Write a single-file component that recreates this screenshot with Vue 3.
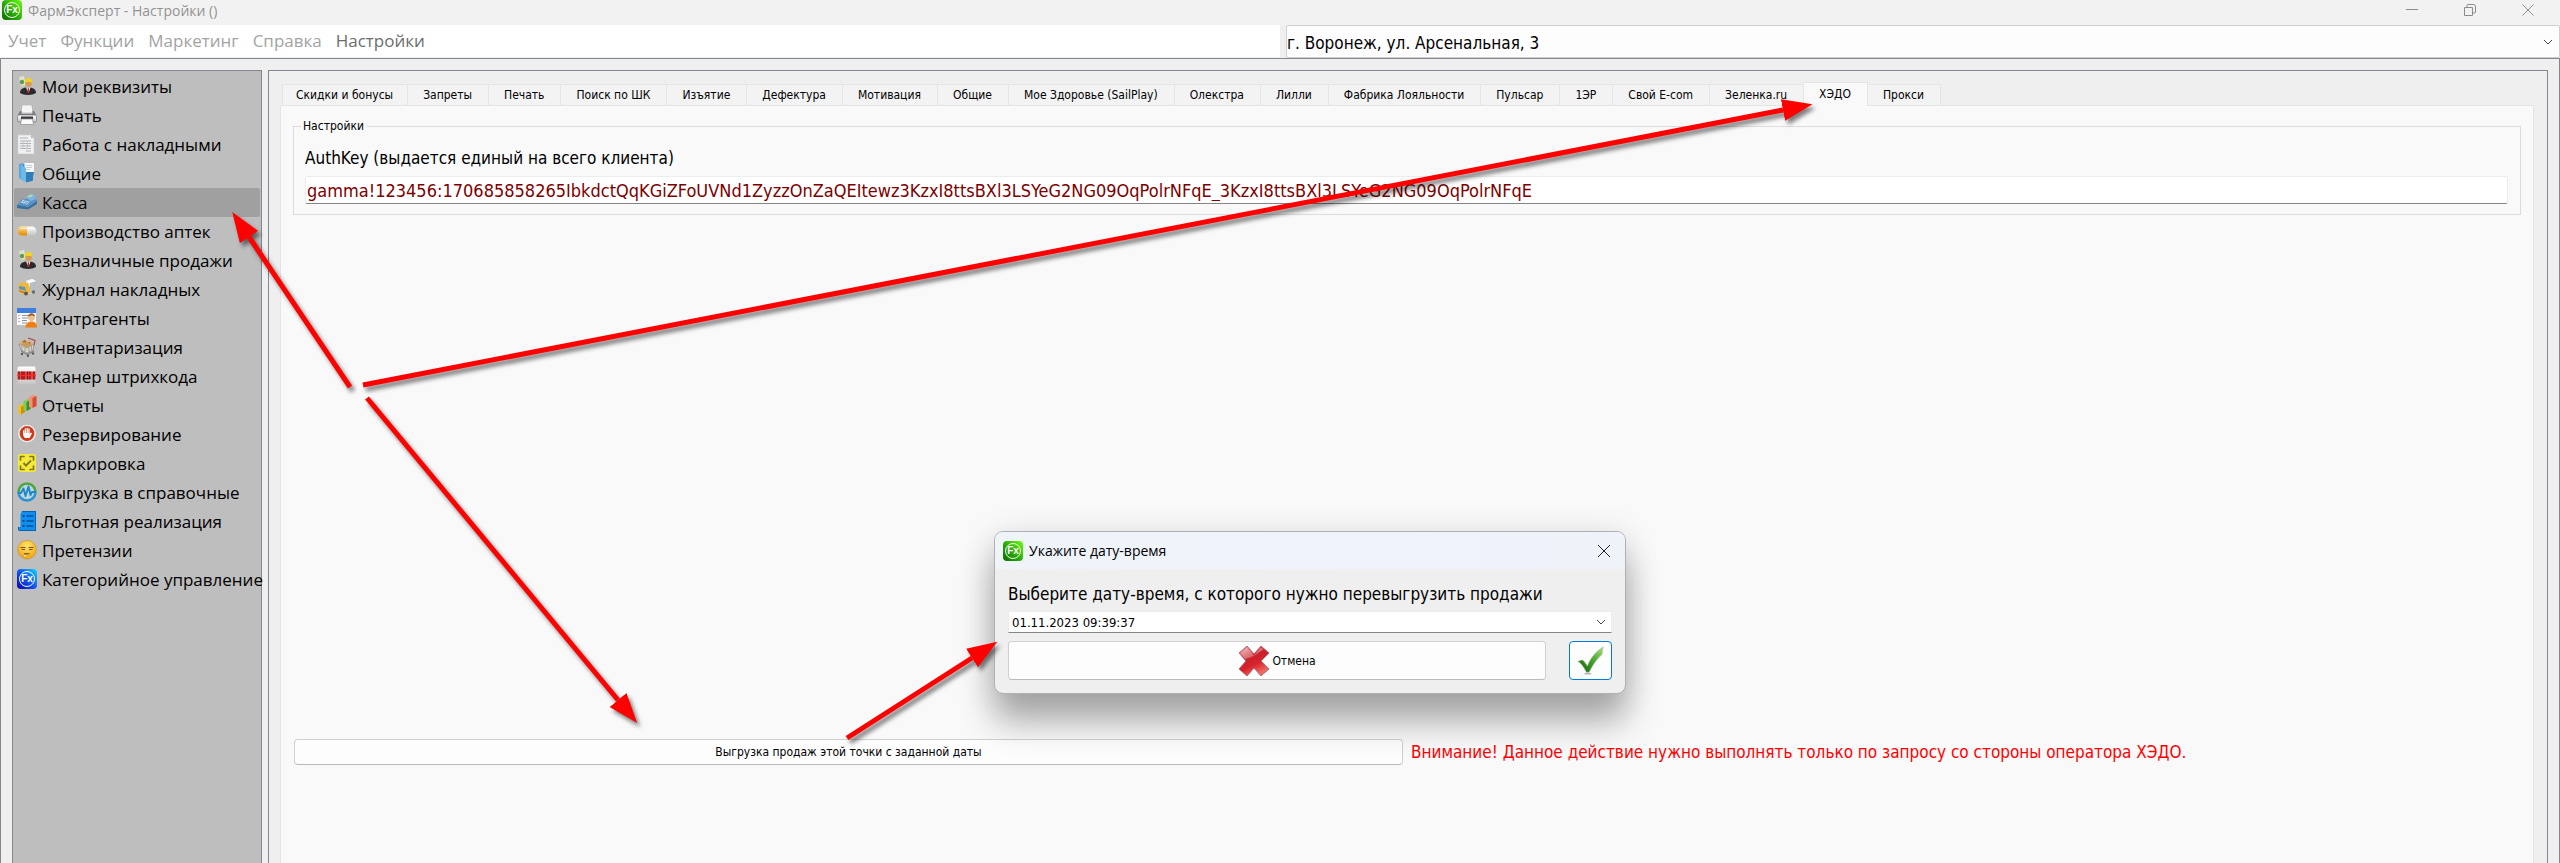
<template>
  <div class="window">
    <svg class="sprite" aria-hidden="true">
      <defs>
        <linearGradient id="g-red" x1="0" y1="0" x2="0.5" y2="1">
          <stop offset="0" stop-color="#f3b6b6" />
          <stop offset="0.45" stop-color="#c9202c" />
          <stop offset="0.7" stop-color="#d7222c" />
          <stop offset="1" stop-color="#ef6a62" />
        </linearGradient>
        <linearGradient id="g-check" x1="1" y1="0" x2="0" y2="1">
          <stop offset="0" stop-color="#a8e07c" />
          <stop offset="0.5" stop-color="#3fa322" />
          <stop offset="1" stop-color="#0d5c08" />
        </linearGradient>
        <linearGradient id="g-gray" x1="0" y1="0" x2="0" y2="1">
          <stop offset="0" stop-color="#ffffff" />
          <stop offset="1" stop-color="#c4c4c4" />
        </linearGradient>
        <linearGradient id="g-orange" x1="0" y1="0" x2="0" y2="1">
          <stop offset="0" stop-color="#ffd98a" />
          <stop offset="1" stop-color="#e58a00" />
        </linearGradient>
        <radialGradient id="g-face" cx="0.5" cy="0.3" r="0.7">
          <stop offset="0" stop-color="#ffe56a" />
          <stop offset="1" stop-color="#f0a410" />
        </radialGradient>
      </defs>

      <symbol id="i-person" viewBox="0 0 20 20">
        <path d="M2 1l5-1 2 9-5 2z" fill="#dfe3c4" />
        <circle cx="5" cy="6" r="2.2" fill="#5f9a58" />
        <path d="M3 8l3 1-1 3z" fill="#c9cfa0" />
        <path d="M3 17c0-4 3-5.500 8-5.500s8 1.500 8 5.500c-4 2.500-12 2.500-16 0z" fill="#2a2a2e" />
        <path d="M9 11.500h4.500l-2 5.500z" fill="#ffffff" />
        <path d="M10.800 12h1l.5 4-1 1.500-1-1.500z" fill="#c22a1e" />
        <circle cx="11.500" cy="7.500" r="3.300" fill="#d99a54" />
        <path d="M7.800 6.500c0-3 1.500-4.500 3.700-4.500s3.700 1.500 3.700 4.500c-2.400-1-5-1-7.400 0z" fill="#f2d41c" />
      </symbol>
      <symbol id="i-printer" viewBox="0 0 20 20">
        <path d="M5 0h10l1 8H4z" fill="#f4f4f4" stroke="#a5a5a5" stroke-width="0.6" />
        <path d="M3 6h1.500v3h11V6H17l2 4v5H1v-5z" fill="#77797d" />
        <rect x="0.500" y="10" width="19" height="7" rx="1.500" fill="url(#g-gray)" stroke="#77797d" stroke-width="0.7" />
        <rect x="4" y="11.500" width="12" height="2.500" fill="#3c3d40" />
        <path d="M4.500 14h11l1 5.500h-13z" fill="#fbfbfb" stroke="#8b8b8b" stroke-width="0.7" />
      </symbol>
      <symbol id="i-sheet" viewBox="0 0 20 20">
        <path d="M1 1h13l3 3v16H1z" fill="#eff1f2" stroke="#cfd2d4" stroke-width="0.7" />
        <path d="M14 1l3 3h-3z" fill="#b9bdc0" />
        <path d="M3 4h8M3 7h11M3 9.500h11M3 12h11M3 14.500h11M9 17h5" stroke="#aeb2b6" stroke-width="1" />
        <path d="M6 7v8M10.500 7v8" stroke="#c3c6ca" stroke-width="0.8" />
      </symbol>
      <symbol id="i-folder" viewBox="0 0 20 20">
        <path d="M2 1l4-1v17l-4-2z" fill="#5aa7dc" />
        <path d="M6 1h10v17H6z" fill="#3d8fcc" />
        <path d="M7.500 0H17v9H7.500z" fill="#f5f8fa" />
        <path d="M9 2.500h6M9 4.500h6M9 6.500h4" stroke="#b7c3cc" stroke-width="0.8" />
        <path d="M4 2l5 3v14.500l-5-3z" fill="#6db9ea" />
        <path d="M9 9h8l-2 9-6 1.500z" fill="#2f7dbb" />
      </symbol>
      <symbol id="i-cash" viewBox="0 0 20 20">
        <path d="M0 13l4-5 14-3 2 4v3l-9 5-11-1z" fill="#5a93c2" />
        <path d="M0 13l11 2 9-6v3l-9 5.500-11-1.500z" fill="#3c6f9d" />
        <path d="M8 5l6-3.500 4 1.500 1 4-5 2z" fill="#7db3dd" />
        <path d="M10 4.500l4-2 2.500 1-4 2z" fill="#b8dc9c" />
        <path d="M3.500 10l7 1.500M5 8.500l7 1.500M6.500 11.800l3-3M4 11l3-3M9.500 12.500l3-3" stroke="#c8e0f2" stroke-width="0.8" />
      </symbol>
      <symbol id="i-pill" viewBox="0 0 20 20">
        <rect x="0.500" y="5.500" width="19" height="9" rx="4.500" fill="url(#g-gray)" />
        <path d="M10 5.500H5a4.500 4.500 0 0 0 0 9h5z" fill="url(#g-orange)" />
        <path d="M4 7.500h12" stroke="#ffffff" stroke-opacity="0.7" stroke-width="1.4" stroke-linecap="round" />
      </symbol>
      <symbol id="i-journal" viewBox="0 0 20 20">
        <path d="M9 2l6-2 4 2v10l-6 3-4-2z" fill="#e3e8ec" />
        <path d="M13 4l6-2v10l-6 3z" fill="#b6bec6" />
        <path d="M9 2l6-2 4 2-6 2z" fill="#fafcfd" />
        <path d="M1 6l4-3 6 1 2 5v5l-5 2-6-3z" fill="#f0b93a" />
        <path d="M2 7l6 1 1 4-7-2z" fill="#5d93b8" />
        <path d="M2 11l6 2v2l-6-2.500z" fill="#c87f18" />
        <circle cx="9" cy="14.500" r="2" fill="#55585c" />
        <circle cx="16.500" cy="13" r="1.700" fill="#686b70" />
      </symbol>
      <symbol id="i-contacts" viewBox="0 0 20 20">
        <rect x="0" y="0" width="19" height="17" fill="#f8f9fb" />
        <rect x="0" y="0" width="19" height="5" fill="#3f7fdc" />
        <path d="M1 7.500h2M1 10.500h2M1 13.500h2" stroke="#d59ac4" stroke-width="1.2" />
        <path d="M5 7.500h10M5 10h6M5 12.500h5M5 15h5" stroke="#8f9398" stroke-width="1.200" />
        <circle cx="14.500" cy="9.500" r="3.400" fill="#efbf94" />
        <path d="M11 9c0-5 7-5 7 0-1-2-5-2-7 0z" fill="#9a5a2a" />
        <path d="M8.500 19.500c0-4 3-6 6-6s5.500 2 5.500 6z" fill="#ef7d10" />
      </symbol>
      <symbol id="i-cart" viewBox="0 0 20 20">
        <path d="M11 1l7 2.500-1 5" fill="none" stroke="#b04848" stroke-width="1.200" />
        <path d="M2 6l5-4 3 2 4 0 3 4-7 5z" fill="#d8b276" />
        <path d="M5 5l3-2 2 3zM10 6l3-1 1 3z" fill="#8f5d2c" />
        <path d="M2 7l8 4 7-4-1 6-6 3-6-3z" fill="#d9d6d0" stroke="#8b8780" stroke-width="0.7" />
        <path d="M4 7l6 3 5-2.500-3-1.500-4-1z" fill="#c99a58" />
        <path d="M5 9v4M8 10.500v4M12 10.500v4M14.500 9v4" stroke="#8b8780" stroke-width="0.7" />
        <path d="M4 14l6 3.500 7-3.500" fill="none" stroke="#77736e" stroke-width="1" />
        <circle cx="5" cy="17" r="1.200" fill="#5c5a58" />
        <circle cx="11" cy="18.800" r="1.200" fill="#5c5a58" />
        <circle cx="16" cy="16.500" r="1.200" fill="#5c5a58" />
      </symbol>
      <symbol id="i-barcode" viewBox="0 0 20 20">
        <rect x="0.500" y="0.500" width="18" height="18" rx="1.500" fill="url(#g-gray)" />
        <rect x="0.500" y="5.500" width="18" height="8" fill="#e04a4a" />
        <path d="M2 5.500v8M5 5.500v8M7 5.500v8M10.500 5.500v8M13 5.500v8M17 5.500v8" stroke="#8a1010" stroke-width="1.400" />
        <path d="M0 9.500h19" stroke="#ff2a2a" stroke-width="1.400" />
      </symbol>
      <symbol id="i-chart" viewBox="0 0 20 20">
        <path d="M1 11l4-2 3 1v7l-4 2.500-3-1.500z" fill="#f0bf22" />
        <path d="M4 12l4-2v7l-4 2.500z" fill="#c98f0e" />
        <path d="M6.500 6l4-2 3 1v9l-4 2-3-1z" fill="#7ccf5a" />
        <path d="M9.500 7l4-2v9l-4 2z" fill="#3f8f2c" />
        <path d="M12 2l4-2 3.500 1v10l-4 2-3.500-1z" fill="#f39078" />
        <path d="M15.500 3l4-2v10l-4 2z" fill="#d84a34" />
      </symbol>
      <symbol id="i-stop" viewBox="0 0 20 20">
        <circle cx="10" cy="9.500" r="9.300" fill="#eeeeee" stroke="#aaaaaa" stroke-width="0.5" />
        <circle cx="10" cy="9.500" r="7.400" fill="#cf3a1e" />
        <path d="M6 9V6.500h1.300V9h.4V4.500H9V9h.5V3.800h1.300V9h.5V4.500h1.300V10l1.200-1.500 1.200.8-2.400 4.700H8c-1.300-1-2-2.600-2-5z" fill="#ffffff" />
      </symbol>
      <symbol id="i-mark" viewBox="0 0 20 20">
        <rect x="1" y="1" width="18" height="18" rx="2.500" fill="#f6e93a" />
        <path d="M3.500 7V3.500H7M13 3.500h3.500V7M16.500 13v3.500H13M7 16.500H3.500V13" fill="none" stroke="#7d7820" stroke-width="1.700" stroke-linecap="round" stroke-linejoin="round" />
        <path d="M6.500 10l2.500 2.700 5-5.200" fill="none" stroke="#7d7820" stroke-width="1.900" />
      </symbol>
      <symbol id="i-pulse" viewBox="0 0 20 20">
        <path d="M1.500 10a8.500 8.500 0 0 1 17 0" fill="none" stroke="#4fa63e" stroke-width="2.600" />
        <path d="M18.500 10a8.500 8.500 0 0 1-17 0" fill="none" stroke="#2a94d4" stroke-width="2.600" />
        <circle cx="10" cy="10" r="7" fill="#b9d7df" />
        <path d="M1 11h3l2.500-4.500L8.500 14l3-9.500 2 8.500 1.500-3h4" fill="none" stroke="#1f86cc" stroke-width="1.900" stroke-linejoin="round" />
      </symbol>
      <symbol id="i-list" viewBox="0 0 20 20">
        <path d="M5 0h14v20H3c-1.500 0-2-1-2-2v-2h2.500V3z" fill="#0f8df0" />
        <path d="M5 .5h13.500v19H3c-1 0-1.500-.6-1.500-1.500V16" fill="none" stroke="#0a5da8" stroke-width="0.9" />
        <path d="M9.500 5h7M9.500 10h7M9.500 15h7" stroke="#07508f" stroke-width="1.300" />
        <path d="M5.500 5h2M5.500 10h2M5.500 15h2" stroke="#07508f" stroke-width="2" />
      </symbol>
      <symbol id="i-face" viewBox="0 0 20 20">
        <circle cx="10" cy="9.700" r="9.300" fill="url(#g-face)" stroke="#d58f10" stroke-width="0.6" />
        <path d="M3.500 7.500h5M11.500 7.500h5" stroke="#7a5206" stroke-width="1.200" />
        <path d="M4.500 9.500h3.500M12 9.500h3.500" stroke="#7a5206" stroke-width="1" />
        <path d="M6 15.500c1-2 3-2.500 6.500-1.500" fill="none" stroke="#7a5206" stroke-width="1.200" />
        <path d="M6 14l3 1.500-2 1z" fill="#ffffff" />
      </symbol>
      <symbol id="i-cross" viewBox="0 0 32 32">
        <path d="M1 8L9 1l7 8 7-8 8 7-8 8 8 8-8 7-7-8-7 8-8-7 7-8z" fill="url(#g-red)" stroke="#a55a5e" stroke-width="0.8" stroke-linejoin="round" />
        <path d="M2.500 8L9 2.500l7 8 7-8 2 2c-5 4-12 9-18 9.500z" fill="#ffffff" fill-opacity="0.3" />
      </symbol>
      <symbol id="i-check" viewBox="0 0 32 32">
        <path d="M2 17c3-1 5-2 6-1 2 1.500 3 4 4.500 6C16 13 22 6 30 1c-1 5-1 6-1 8-7 6-11 13-14.500 20h-3C9 24 6 19 2 17z" fill="url(#g-check)" stroke="#b6bdb2" stroke-width="0.8" />
        <ellipse cx="13" cy="30.500" rx="4" ry="1" fill="#b7b7b7" />
      </symbol>
    </svg>

    <header class="titlebar">
      <span class="icon logo"><i>Fx</i></span>
      <h1>ФармЭксперт - Настройки ()</h1>
      <div class="window-buttons">
        <button type="button" aria-label="Свернуть">
          <svg viewBox="0 0 14 14"><path d="M1 6.500h12" /></svg>
        </button>
        <button type="button" aria-label="Развернуть">
          <svg viewBox="0 0 14 14"><path d="M1.500 4.500h8v8h-8zM4 4V2.500Q4 1.500 5 1.500h5.500q2 0 2 2V9q0 1-1 1h-1.500" /></svg>
        </button>
        <button type="button" aria-label="Закрыть">
          <svg viewBox="0 0 14 14"><path d="M1.500 1.500l11 11M12.500 1.500l-11 11" /></svg>
        </button>
      </div>
    </header>

    <div class="topline">
      <nav class="menu">
        <a v-for="m in menu" :key="m" href="#" :class="{ current: m === 'Настройки' }">{{ m }}</a>
      </nav>
      <div class="combo">
        <select v-model="address" aria-label="Адрес">
          <option>г. Воронеж, ул. Арсенальная, 3</option>
        </select>
        <svg class="chevron" viewBox="0 0 10 6"><path d="M1 1l4 4 4-4" /></svg>
      </div>
    </div>

    <main class="workspace">
      <aside class="sidebar">
        <button
          v-for="s in sections"
          :key="s.title"
          type="button"
          :class="{ selected: s.title === section }"
          @click="section = s.title"
        >
          <span v-if="s.icon === 'logo'" class="icon logo blue"><i>Fx</i></span>
          <svg v-else class="icon"><use :href="'#i-' + s.icon" /></svg>
          <span>{{ s.title }}</span>
        </button>
      </aside>

      <section class="content">
        <div class="tabs" role="tablist">
          <button
            v-for="t in tabs"
            :key="t"
            type="button"
            role="tab"
            :aria-selected="t === tab"
            :class="{ active: t === tab }"
            @click="tab = t"
          >{{ t }}</button>
        </div>
        <div class="pane">
          <fieldset>
            <legend>Настройки</legend>
            <label for="authkey">AuthKey (выдается единый на всего клиента)</label>
            <input id="authkey" v-model="authKey" type="text" spellcheck="false">
          </fieldset>
          <div class="actions">
            <button type="button" class="btn">Выгрузка продаж этой точки с заданной даты</button>
            <p>Внимание! Данное действие нужно выполнять только по запросу со стороны оператора ХЭДО.</p>
          </div>
        </div>
      </section>
    </main>

    <div class="dialog" role="dialog" aria-labelledby="dialog-title">
      <div class="dialog-head">
        <span class="icon logo"><i>Fx</i></span>
        <h2 id="dialog-title">Укажите дату-время</h2>
        <button type="button" aria-label="Закрыть">
          <svg viewBox="0 0 14 14"><path d="M1 1l12 12M13 1L1 13" /></svg>
        </button>
      </div>
      <div class="dialog-body">
        <label for="since">Выберите дату-время, с которого нужно перевыгрузить продажи</label>
        <div class="combo date">
          <input id="since" v-model="since" type="text">
          <svg class="chevron" viewBox="0 0 10 6"><path d="M1 1l4 4 4-4" /></svg>
        </div>
        <div class="dialog-buttons">
          <button type="button" class="btn cancel">
            <svg><use href="#i-cross" /></svg>Отмена
          </button>
          <button type="button" class="btn ok" aria-label="ОК">
            <svg><use href="#i-check" /></svg>
          </button>
        </div>
      </div>
    </div>

    <svg class="arrows" aria-hidden="true">
      <defs>
        <marker id="head" markerUnits="userSpaceOnUse" markerWidth="30" markerHeight="22" refX="0" refY="11" orient="auto">
          <path d="M0 0l30 11L0 22z" fill="#ff0000" />
        </marker>
      </defs>
      <path v-for="a in arrows" :key="a" :d="a" marker-end="url(#head)" />
    </svg>
  </div>
</template>

<script setup>
import { ref } from 'vue'

const menu = ['Учет', 'Функции', 'Маркетинг', 'Справка', 'Настройки']

const sections = [
  { title: 'Мои реквизиты', icon: 'person' },
  { title: 'Печать', icon: 'printer' },
  { title: 'Работа с накладными', icon: 'sheet' },
  { title: 'Общие', icon: 'folder' },
  { title: 'Касса', icon: 'cash' },
  { title: 'Производство аптек', icon: 'pill' },
  { title: 'Безналичные продажи', icon: 'person' },
  { title: 'Журнал накладных', icon: 'journal' },
  { title: 'Контрагенты', icon: 'contacts' },
  { title: 'Инвентаризация', icon: 'cart' },
  { title: 'Сканер штрихкода', icon: 'barcode' },
  { title: 'Отчеты', icon: 'chart' },
  { title: 'Резервирование', icon: 'stop' },
  { title: 'Маркировка', icon: 'mark' },
  { title: 'Выгрузка в справочные', icon: 'pulse' },
  { title: 'Льготная реализация', icon: 'list' },
  { title: 'Претензии', icon: 'face' },
  { title: 'Категорийное управление', icon: 'logo' }
]

const tabs = [
  'Скидки и бонусы', 'Запреты', 'Печать', 'Поиск по ШК', 'Изъятие', 'Дефектура',
  'Мотивация', 'Общие', 'Мое Здоровье (SailPlay)', 'Олекстра', 'Лилли',
  'Фабрика Лояльности', 'Пульсар', '1ЭР', 'Свой E-com', 'Зеленка.ru', 'ХЭДО', 'Прокси'
]

// shafts stop where the arrow head begins
const arrows = [
  'M350 387L249 237',
  'M363 385L1783 110',
  'M367 398L618 700',
  'M847 738L972 658'
]

const address = ref('г. Воронеж, ул. Арсенальная, 3')
const section = ref('Касса')
const tab = ref('ХЭДО')
const authKey = ref('gamma!123456:170685858265IbkdctQqKGiZFoUVNd1ZyzzOnZaQEItewz3KzxI8ttsBXl3LSYeG2NG09OqPolrNFqE_3KzxI8ttsBXl3LSYeG2NG09OqPolrNFqE')
const since = ref('01.11.2023 09:39:37')
</script>

<style>
body { margin: 0; }
</style>

<style scoped>
.window {
  position: relative;
  display: flex;
  flex-direction: column;
  min-height: 100vh;
  overflow: hidden;
  background: #efefef;
  color: #000;
  font-family: "DejaVu Sans Condensed", "DejaVu Sans", sans-serif;
  font-size: 12px;
}

.sprite { position: absolute; width: 0; height: 0; }

button, input, select {
  box-sizing: border-box;
  margin: 0;
  padding: 0;
  border: 0;
  background: none;
  color: inherit;
  font: inherit;
}

.icon { flex: none; width: 20px; height: 20px; }

.logo {
  display: flex;
  align-items: center;
  justify-content: center;
  border-radius: 4px;
  background: linear-gradient(45deg, #0a6a00, #2fae0c 50%, #6dff14);
}
.logo i {
  box-sizing: border-box;
  width: 16px;
  height: 16px;
  border: 1px solid #f0ffe8;
  border-radius: 50%;
  color: #fff;
  font: bold 10px/14px "Liberation Sans", sans-serif;
  text-align: center;
}
.blue { background: linear-gradient(45deg, #1200a8, #1257f0 50%, #14d4ff); }

.titlebar {
  display: flex;
  align-items: center;
  gap: 6px;
  height: 25px;
  padding: 0 3px 0 2px;
  background: #f2f2f2;
}
.titlebar .icon { margin-bottom: 5px; }
.titlebar h1 {
  margin: 0 auto 3px 0;
  color: #929292;
  font: 14px/20px "Open Sans", sans-serif;
}
.window-buttons { display: flex; margin-bottom: 5px; }
.window-buttons button { width: 58px; height: 20px; }
.window-buttons svg { width: 14px; height: 14px; fill: none; stroke: #8c8c8c; vertical-align: middle; }

.topline { display: flex; gap: 6px; height: 33px; }
.menu {
  flex: 1;
  display: flex;
  align-items: center;
  gap: 14px;
  padding-left: 8px;
  margin-bottom: 1px;
  background: #fff;
  font: 17px/24px "Open Sans", sans-serif;
}
.menu a { color: #a3a3a3; text-decoration: none; }
.menu .current { color: #6d6d6d; }

.combo { position: relative; flex: 1; display: flex; }
.topline .combo {
  box-sizing: border-box;
  border: 1px solid #cfcfcf;
  border-radius: 2px;
  background: #fdfdfd;
}
.combo select { flex: 1; padding-top: 2px; appearance: none; font-size: 17px; }
.chevron {
  position: absolute;
  top: 50%;
  right: 6px;
  width: 10px;
  height: 6px;
  margin-top: -3px;
  fill: none;
  stroke: #444;
  pointer-events: none;
}

.workspace {
  flex: 1;
  display: flex;
  gap: 6px;
  padding: 11px 11px 0;
  border: 1px solid #828790;
  border-bottom: 0;
}

.sidebar {
  box-sizing: border-box;
  flex: none;
  width: 250px;
  padding: 1px;
  border: 1px solid #828790;
  border-bottom: 0;
  background: #bebebe;
}
.sidebar button {
  display: flex;
  align-items: center;
  gap: 5px;
  width: 100%;
  height: 29px;
  padding-left: 3px;
  border-radius: 2px;
  font: 17px/24px "Open Sans", sans-serif;
  white-space: nowrap;
}
.sidebar .icon { margin-bottom: 2px; }
.sidebar .selected { background: #a0a0a0; }

.content {
  flex: 1;
  min-width: 0;
  display: flex;
  flex-direction: column;
  padding: 11px 13px 0 11px;
  border: 1px solid #828790;
  border-bottom: 0;
}

.tabs { display: flex; align-items: flex-end; padding-left: 2px; }
.tabs button {
  height: 21px;
  padding: 0 16px 0 15px;
  border: 1px solid #e5e5e5;
  border-width: 1px 1px 0 0;
  background: #f3f3f3;
  line-height: 20px;
  white-space: nowrap;
}
.tabs button:first-child { padding: 0 14px 0 13px; border-left-width: 1px; }
.tabs .active {
  position: relative;
  height: 24px;
  margin-bottom: -1px;
  padding-bottom: 2px;
  background: #f9f9f9;
}

.pane {
  flex: 1;
  display: flex;
  flex-direction: column;
  padding: 12px 12px 98px;
  border: 1px solid #e5e5e5;
  border-bottom: 0;
  background: #f9f9f9;
}

fieldset {
  min-width: 0;
  margin: 0;
  padding: 12px 12px 10px 11px;
  border: 1px solid #dcdcdc;
}
legend { padding: 0 3px 0 2px; margin-left: -4px; line-height: 16px; }
fieldset label { display: block; margin-bottom: 6px; font-size: 17px; line-height: 24px; }
fieldset input {
  width: 100%;
  height: 28px;
  padding: 0 1px;
  border: 1px solid #ececec;
  border-bottom-color: #858585;
  border-radius: 2px;
  background: #fff;
  color: #7d0000;
  font-size: 18px;
}

.actions {
  display: grid;
  grid-template-columns: 1fr 1fr;
  align-items: center;
  gap: 8px;
  margin-top: auto;
  padding: 0 1px;
}
.actions p { margin: 0; color: #f00; font-size: 17px; line-height: 24px; white-space: nowrap; }

.btn {
  height: 26px;
  border: 1px solid #d0d0d0;
  border-bottom-color: #bababa;
  border-radius: 4px;
  background: #fdfdfd;
}
.actions .btn { background: none; background-color: rgba(255, 255, 255, 0.7); }

.dialog {
  position: absolute;
  top: 531px;
  left: 994px;
  box-sizing: border-box;
  width: 632px;
  border: 1px solid #b0b0b0;
  border-radius: 9px;
  background: #efefef;
  box-shadow: 0 28px 34px rgba(0, 0, 0, 0.3), 0 4px 34px rgba(0, 0, 0, 0.12);
}
.dialog-head {
  display: flex;
  align-items: center;
  gap: 6px;
  height: 37px;
  padding: 0 12px 0 8px;
  border-radius: 8px 8px 0 0;
  background: linear-gradient(90deg, #eff4f9, #eff3fb 40%, #f0f2fa);
}
.dialog-head h2 {
  flex: 1;
  margin: 0;
  font: 14px/20px "Open Sans", sans-serif;
}
.dialog-head button { width: 18px; height: 20px; }
.dialog-head svg { width: 14px; height: 14px; fill: none; stroke: #222; vertical-align: middle; }
.dialog-body { padding: 13px; }
.dialog-body label { display: block; margin-bottom: 5px; font-size: 17px; line-height: 24px; }
.date { margin-bottom: 8px; }
.date input {
  flex: 1;
  height: 22px;
  padding: 0 3px;
  border: 1px solid #ececec;
  border-bottom-color: #858585;
  background: #fff;
  font-size: 13px;
}
.dialog-buttons { display: flex; gap: 23px; }
.dialog-buttons .btn { display: flex; align-items: center; justify-content: center; gap: 2px; height: 39px; }
.dialog-buttons svg { width: 32px; height: 32px; }
.cancel { flex: 1; }
.dialog-buttons .ok { width: 43px; border-color: #0078d4; }
.dialog-buttons .ok svg { width: 29px; height: 29px; }

.arrows {
  position: absolute;
  top: 0;
  left: 0;
  width: 100%;
  height: 100%;
  pointer-events: none;
  filter: drop-shadow(3px 4px 2px rgba(0, 0, 0, 0.5));
}
.arrows path { stroke: #f00; stroke-width: 5; }
.arrows marker path { stroke: none; }
</style>
